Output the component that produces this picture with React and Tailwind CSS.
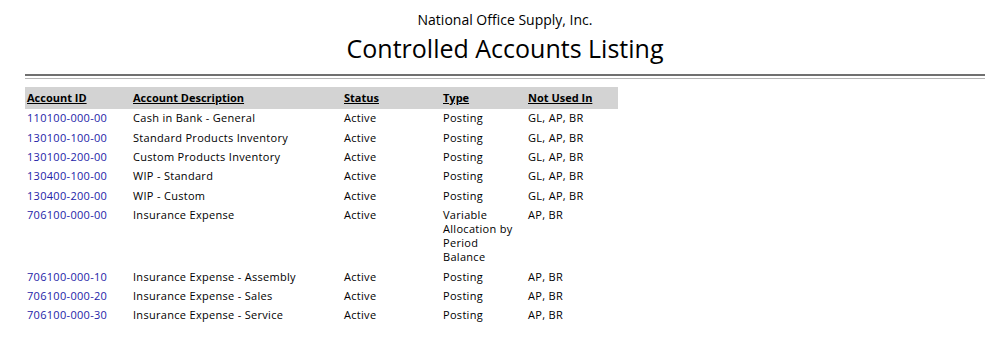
const ROWS = [
  { id: "110100-000-00", desc: "Cash in Bank - General", status: "Active", type: "Posting", notUsed: "GL, AP, BR" },
  { id: "130100-100-00", desc: "Standard Products Inventory", status: "Active", type: "Posting", notUsed: "GL, AP, BR" },
  { id: "130100-200-00", desc: "Custom Products Inventory", status: "Active", type: "Posting", notUsed: "GL, AP, BR" },
  { id: "130400-100-00", desc: "WIP - Standard", status: "Active", type: "Posting", notUsed: "GL, AP, BR" },
  { id: "130400-200-00", desc: "WIP - Custom", status: "Active", type: "Posting", notUsed: "GL, AP, BR" },
  { id: "706100-000-00", desc: "Insurance Expense", status: "Active", type: "Variable Allocation by Period Balance", notUsed: "AP, BR" },
  { id: "706100-000-10", desc: "Insurance Expense - Assembly", status: "Active", type: "Posting", notUsed: "AP, BR" },
  { id: "706100-000-20", desc: "Insurance Expense - Sales", status: "Active", type: "Posting", notUsed: "AP, BR" },
  { id: "706100-000-30", desc: "Insurance Expense - Service", status: "Active", type: "Posting", notUsed: "AP, BR" },
];

const App = () => {
  return (
    <div className="min-h-[351px] bg-white text-black font-['Open_Sans',sans-serif]">
      <div className="ml-[25px] mr-[7px] pt-[10px]">
        {/* 보고서 제목 */}
        <div className="text-center">
          <p className="text-[14px] leading-[20px]">National Office Supply, Inc.</p>
          <h1 className="mt-[2px] text-[25px] leading-[32px]">Controlled Accounts Listing</h1>
        </div>

        <div className="mt-[10px] h-[2px] bg-[#707070]" />
        <div className="mt-[2px] h-[1px] bg-[#b4b4b4]" />

        <table className="mt-[8px] w-[593px] table-fixed border-collapse text-[11px] leading-[14px] tracking-[0.3px]">
          <colgroup>
            <col className="w-[106px]" />
            <col className="w-[211px]" />
            <col className="w-[99px]" />
            <col className="w-[85px]" />
            <col className="w-[92px]" />
          </colgroup>
          <thead>
            <tr className="bg-[#d3d3d3]">
              {["Account ID", "Account Description", "Status", "Type", "Not Used In"].map((h) => (
                <th key={h} className="py-[3.8px] pl-[2px] text-left font-bold underline tracking-normal">
                  {h}
                </th>
              ))}
            </tr>
          </thead>
          <tbody>
            {ROWS.map((r) => (
              <tr key={r.id} className="align-top">
                <td className="py-[2.7px] pl-[2px] text-[#2323a8]">{r.id}</td>
                <td className="py-[2.7px] pl-[2px]">{r.desc}</td>
                <td className="py-[2.7px] pl-[2px]">{r.status}</td>
                <td className="py-[2.7px] pl-[2px] pr-[6px]">{r.type}</td>
                <td className="py-[2.7px] pl-[2px]">{r.notUsed}</td>
              </tr>
            ))}
          </tbody>
        </table>
      </div>
    </div>
  );
};

export default App;
